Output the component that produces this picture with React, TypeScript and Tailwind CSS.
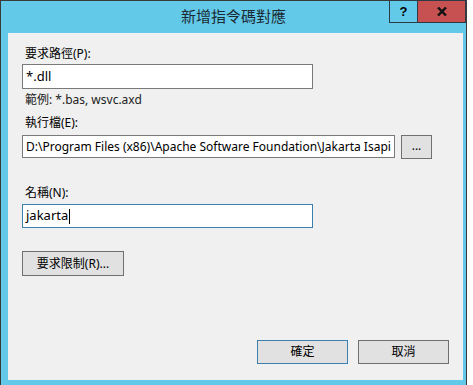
import React from "react";

const font = { fontFamily: '"Noto Sans", "Noto Sans CJK TC", sans-serif' };

export default function App() {
  return (
    <div className="w-[473px] h-[385px] bg-white flex overflow-hidden text-[12px] text-black" style={font}>
      <div className="w-[467px] h-[385px] border-l border-t border-r border-[#3a3a3a] bg-[#63c9e9] flex flex-col">
        {/* title bar */}
        <div className="h-[32px] flex relative">
          <div className="flex-1 flex items-center justify-center pb-[2px] text-[15px] text-[#1b2a33]" style={{ fontFamily: '"Noto Sans CJK TC", sans-serif' }}>
            新增指令碼對應
          </div>
          <div className="absolute right-0 top-[-1px] flex h-[23px]">
            <div className="w-[29px] h-full border border-[#2f3b44] bg-[#63c9e9] flex items-center justify-center text-[13px] font-bold text-black leading-none" style={{ fontFamily: '"Liberation Sans", sans-serif' }}>
              ?
            </div>
            <div className="w-[48px] h-full border border-l-0 border-[#2f3b44] bg-[#c75050] flex items-center justify-center">
              <svg width="10" height="9" viewBox="0 0 10 9">
                <path d="M1 0.5 L9 8.5 M9 0.5 L1 8.5" stroke="#111" strokeWidth="2.4" />
              </svg>
            </div>
          </div>
        </div>
        {/* content */}
        <div className="ml-[7px] mr-[3px] h-[347px] bg-[#f0f0f0] flex flex-col pl-[14px] pr-[14px] pt-[13px]">
          <div className="h-[16px] leading-[16px] ml-[3px]">要求路徑(P):</div>
          <div className="mt-[2px] w-[291px] h-[25px] border border-[#7a7a7a] bg-white flex items-center px-[3px] text-[13px]">*.dll</div>
          <div className="mt-[3px] h-[16px] leading-[16px] ml-[3px] text-[#222]">範例: *.bas, wsvc.axd</div>
          <div className="mt-[7px] h-[16px] leading-[16px] ml-[3px]">執行檔(E):</div>
          <div className="mt-[4px] flex items-start">
            <div className="w-[373px] h-[23px] border border-[#7a7a7a] bg-white flex items-center px-[3px] text-[12px] whitespace-nowrap overflow-hidden">
              D:\Program Files (x86)\Apache Software Foundation\Jakarta Isapi
            </div>
            <div className="ml-[6px] w-[31px] h-[24px] border border-[#707070] bg-[#e1e1e1] flex items-center justify-center pb-[2px]">...</div>
          </div>
          <div className="mt-[26px] h-[16px] leading-[16px] ml-[3px]">名稱(N):</div>
          <div className="mt-[3px] w-[291px] h-[24px] border border-[#3c7fb1] bg-white flex items-center px-[3px] text-[13px]">
            jakarta<span className="inline-block w-[1px] h-[15px] bg-black ml-[1px]" />
          </div>
          <div className="mt-[23px] w-[102px] h-[25px] border border-[#707070] bg-[#e1e1e1] flex items-center justify-center">要求限制(R)...</div>
          <div className="mt-[64px] flex justify-end gap-[10px]">
            <div className="w-[91px] h-[24px] border border-[#3c7fb1] bg-[#e1e1e1] flex items-center justify-center">確定</div>
            <div className="w-[91px] h-[24px] border border-[#707070] bg-[#e1e1e1] flex items-center justify-center">取消</div>
          </div>
        </div>
      </div>
    </div>
  );
}
